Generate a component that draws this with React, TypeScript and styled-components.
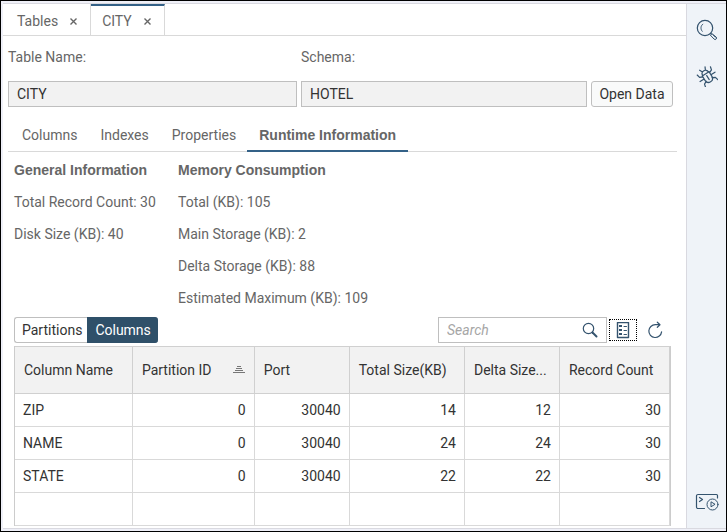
import React from "react";
import styled, { createGlobalStyle, css } from "styled-components";

const GlobalStyle = createGlobalStyle`
  *, *::before, *::after { box-sizing: border-box; }
  body {
    margin: 0;
    background: #fff;
    color: #333;
    font: 14px/20px Roboto, "Liberation Sans", sans-serif;
  }
  button, input { font: inherit; color: inherit; margin: 0; }
  button { cursor: pointer; }
`;

const headingFont = `"Liberation Sans", Arial, sans-serif`;

const Frame = styled.div`
  display: flex;
  min-height: 100vh;
  border: 1px solid #000;
  padding: 2px 0 2px 2px;
  background: #eff0f8;
`;

const Main = styled.main`
  flex: 1;
  min-width: 0;
  border-top: 1px solid #d9d9e0;
  border-bottom: 1px solid #d9d9e0;
  background: #fff;
`;

const SideBar = styled.aside`
  display: flex;
  flex-direction: column;
  align-items: center;
  gap: 24px;
  width: 40px;
  padding: 15px 0 17px;
  border-top: 1px solid #d9d9e0;
  border-left: 1px solid #d9d9e0;
  border-bottom: 1px solid #d9d9e0;
  background: #eff3f8;
`;

const SideButton = styled.button<{ $last?: boolean }>`
  display: flex;
  padding: 0;
  border: 0;
  background: none;
  ${(p) => p.$last && css`margin-top: auto;`}
`;

const TabStrip = styled.div`
  display: flex;
  height: 32px;
  border-bottom: 1px solid #d9d9d9;
`;

const EditorTab = styled.div<{ $active?: boolean }>`
  display: flex;
  align-items: center;
  gap: 11px;
  padding: ${(p) => (p.$active ? "0 12px 0 11px" : "2px 12px 0 14px")};
  border-right: 1px solid #d9d9d9;
  color: #666;
  ${(p) => p.$active && css`border-top: 2px solid #346187;`}
`;

const TabLabel = styled.button`
  padding: 0;
  border: 0;
  background: none;
`;

const CloseButton = styled.button`
  display: flex;
  padding: 2px 0 0;
  border: 0;
  background: none;
`;

const Properties = styled.form`
  display: grid;
  grid-template-columns: minmax(0, 289fr) minmax(0, 286fr) 82px;
  gap: 14px 4px;
  padding: 11px 13px 0 5px;
`;

const FieldLabel = styled.label`
  color: #666;
`;

const ReadOnlyField = styled.input`
  grid-row: 2;
  width: 100%;
  height: 26px;
  padding: 0 8px;
  border: 1px solid #bfbfbf;
  background: #f2f2f2;
`;

const OpenButton = styled.button`
  grid-row: 2;
  grid-column: 3;
  height: 26px;
  padding: 0;
  border: 1px solid #bfbfbf;
  border-radius: 3px;
  background: #f9fafa;
  white-space: nowrap;
`;

const SubTabs = styled.div`
  display: flex;
  height: 45px;
  margin: 0 9px 0 5px;
  border-bottom: 1px solid #d9d9d9;
`;

const SubTab = styled.button<{ $active?: boolean }>`
  display: flex;
  align-items: center;
  height: 45px;
  padding: 12px 11px 0 12px;
  border: 0;
  border-bottom: 2px solid transparent;
  background: none;
  color: #666;
  white-space: nowrap;
  &:first-child { padding-left: 14px; }
  ${(p) => p.$active && css`
    padding-right: 12px;
    border-color: #346187;
    font-family: ${headingFont};
    font-weight: 700;
  `}
`;

const Info = styled.div`
  display: grid;
  grid-template-columns: 164px 1fr;
  padding: 2px 16px 0 11px;
  color: #666;
`;

const InfoList = styled.ul`
  margin: 0;
  padding: 0;
  list-style: none;
  line-height: 32px;
`;

const InfoTitle = styled.h2`
  margin: 0;
  font: 700 14px/32px ${headingFont};
  white-space: nowrap;
`;

const Toolbar = styled.div`
  display: flex;
  align-items: center;
  height: 26px;
  margin: 3px 19px 3px 11px;
`;

const SegmentButton = styled.button<{ $active?: boolean }>`
  height: 26px;
  padding: 0 5px 0 7px;
  border: 1px solid #bfbfbf;
  border-right: 0;
  border-radius: 3px 0 0 3px;
  background: #fff;
  ${(p) => p.$active && css`
    padding: 0 7px;
    border-color: #2f5069;
    border-radius: 0 3px 3px 0;
    background: #2f5069;
    color: #fff;
  `}
`;

const SearchBox = styled.div`
  display: flex;
  align-items: center;
  width: 169px;
  height: 26px;
  margin-left: auto;
  padding: 0 8px;
  border: 1px solid #bfbfbf;
`;

const SearchInput = styled.input`
  flex: 1;
  min-width: 0;
  padding: 0;
  border: 0;
  outline: 0;
  background: none;
  &::placeholder {
    color: #a6a6a6;
    font-style: italic;
  }
`;

const IconButton = styled.button<{ $focused?: boolean }>`
  display: flex;
  align-items: center;
  justify-content: center;
  width: 28px;
  height: 22px;
  margin-left: 2px;
  padding: 0;
  border: 1px ${(p) => (p.$focused ? "dotted #000" : "solid transparent")};
  background: none;
  &:last-child { width: 24px; margin-left: 6px; }
`;

const GridWrap = styled.div`
  margin: 0 15px 1px 11px;
  border-left: 1px solid #ccc;
`;

const Grid = styled.table`
  width: 100%;
  table-layout: fixed;
  border-collapse: separate;
  border-spacing: 0;
  border-right: 1px solid #ccc;
`;

const HeadCell = styled.th<{ $share: number }>`
  width: ${(p) => p.$share}%;
  height: 48px;
  padding: 0 9px;
  border-top: 1px solid #d0d0d0;
  border-right: 1px solid #d0d0d0;
  border-bottom: 1px solid #d0d0d0;
  background: #f2f2f2;
  font-weight: 400;
  text-align: left;
`;

const HeadContent = styled.span`
  display: flex;
  align-items: center;
  justify-content: space-between;
  white-space: nowrap;
`;

const Cell = styled.td`
  height: 33px;
  padding: 0 8px;
  border-right: 1px solid #d9d9d9;
  border-bottom: 1px solid #d9d9d9;
  text-align: right;
  &:first-child { text-align: left; }
`;

const line = { fill: "none", stroke: "#34536e", strokeLinecap: "round", strokeLinejoin: "round" } as const;

const CloseIcon = () => (
  <svg width="9" height="9" viewBox="0 0 9 9" aria-hidden="true">
    <path d="M1.5 1.5l6 6M7.5 1.5l-6 6" fill="none" stroke="#666" strokeWidth="1.4" />
  </svg>
);

const MagnifierIcon = () => (
  <svg width="22" height="22" viewBox="0 0 22 22" {...line} aria-hidden="true">
    <circle cx="9" cy="9" r="7.7" strokeWidth="1.2" />
    <path d="M6.8 5.2C4.4 6.7 4.4 10.5 6.2 12.3M14.5 14.5l1 1M15.3 14.1l4.8 3.9a1.4 1.4 0 0 1-2 2.1L14.2 16zM17 15.8l2.4 2.4" />
  </svg>
);

const BugIcon = () => (
  <svg width="22" height="22" viewBox="0 0 22 22" {...line} strokeWidth="1.2" aria-hidden="true">
    <g transform="rotate(-32 11 11)">
      <path d="M7 8.4h8v5.2c0 5.6-8 5.6-8 0zM7.6 8.2c0-4.4 6.8-4.4 6.8 0M11 10.5v4.7M9.3 5.2L7.8 2.2M12.7 5.2l1.5-3M7 9.5L4 8.2 3.2 5M15 9.5l3-1.3.8-3.2M7 12H2.2M15 12h4.8M7.6 15l-3 1.6-.8 3.2M14.4 15l3 1.6.8 3.2" />
    </g>
  </svg>
);

const ConsoleIcon = () => (
  <svg width="24" height="18" viewBox="0 0 24 18" {...line} aria-hidden="true">
    <path d="M9.5 15.5H3a1.5 1.5 0 0 1-1.5-1.5V3A1.5 1.5 0 0 1 3 1.5h18.5a1 1 0 0 1 1 1V5M4.5 4.5L7.5 6.5l-3 2" strokeWidth="1.2" />
    <circle cx="17.5" cy="11.5" r="5.5" />
    <path d="M16 9.2v4.6l3.7-2.3z" />
  </svg>
);

const SearchIcon = () => (
  <svg width="16" height="16" viewBox="0 0 16 16" {...line} aria-hidden="true">
    <circle cx="6.5" cy="6.5" r="5.2" strokeWidth="1.2" />
    <path d="M10.5 10.5l4 4" strokeWidth="2" />
  </svg>
);

const ListIcon = () => (
  <svg width="14" height="17" viewBox="0 0 14 17" {...line} aria-hidden="true">
    <path d="M1.5 .5h11v15h-11z" strokeWidth="1.4" />
    <path d="M3 3h3v2h-3zM3 7h3v2h-3zM3 11h3v2h-3z" fill="#34536e" stroke="none" />
    <path d="M8 4.5h2.5M8 8.5h2.5M8 12.5h2.5" />
  </svg>
);

const RefreshIcon = () => (
  <svg width="16" height="18" viewBox="0 0 16 18" {...line} strokeWidth="1.2" aria-hidden="true">
    <path d="M12.5 3.7H8.3a6.4 6.4 0 1 0 6.3 7.2M10.3 1.2l2.7 2.5-2.7 2.6" />
  </svg>
);

const SortIcon = () => (
  <svg width="12" height="8" viewBox="0 0 12 8" aria-hidden="true">
    <path d="M4 .5h4M3 2.5h6M2 4.5h8M0 6.5h12" stroke="#777" />
  </svg>
);

const columns = [
  { title: "Column Name", share: 18 },
  { title: "Partition ID", share: 18.6, sorted: true },
  { title: "Port", share: 14.5 },
  { title: "Total Size(KB)", share: 17.6 },
  { title: "Delta Size...", share: 14.5 },
  { title: "Record Count", share: 16.8 },
];

const rows = [
  ["ZIP", "0", "30040", "14", "12", "30"],
  ["NAME", "0", "30040", "24", "24", "30"],
  ["STATE", "0", "30040", "22", "22", "30"],
  ["", "", "", "", "", ""],
];

const memory = ["Total (KB): 105", "Main Storage (KB): 2", "Delta Storage (KB): 88", "Estimated Maximum (KB): 109"];

export default function App() {
  return (
    <>
      <GlobalStyle />
      <Frame>
        <Main>
          <TabStrip>
            <EditorTab>
              <TabLabel>Tables</TabLabel>
              <CloseButton aria-label="Close Tables"><CloseIcon /></CloseButton>
            </EditorTab>
            <EditorTab $active>
              <TabLabel>CITY</TabLabel>
              <CloseButton aria-label="Close CITY"><CloseIcon /></CloseButton>
            </EditorTab>
          </TabStrip>

          <Properties onSubmit={(e) => e.preventDefault()}>
            <FieldLabel htmlFor="table-name">Table Name:</FieldLabel>
            <FieldLabel htmlFor="schema">Schema:</FieldLabel>
            <ReadOnlyField id="table-name" value="CITY" readOnly />
            <ReadOnlyField id="schema" value="HOTEL" readOnly />
            <OpenButton type="button">Open Data</OpenButton>
          </Properties>

          <SubTabs role="tablist">
            <SubTab role="tab">Columns</SubTab>
            <SubTab role="tab">Indexes</SubTab>
            <SubTab role="tab">Properties</SubTab>
            <SubTab role="tab" aria-selected $active>Runtime Information</SubTab>
          </SubTabs>

          <Info>
            <section>
              <InfoTitle>General Information</InfoTitle>
              <InfoList>
                <li>Total Record Count: 30</li>
                <li>Disk Size (KB): 40</li>
              </InfoList>
            </section>
            <section>
              <InfoTitle>Memory Consumption</InfoTitle>
              <InfoList>{memory.map((m) => <li key={m}>{m}</li>)}</InfoList>
            </section>
          </Info>

          <Toolbar>
            <SegmentButton>Partitions</SegmentButton>
            <SegmentButton $active>Columns</SegmentButton>
            <SearchBox>
              <SearchInput type="text" placeholder="Search" aria-label="Search" />
              <SearchIcon />
            </SearchBox>
            <IconButton $focused aria-label="Column settings"><ListIcon /></IconButton>
            <IconButton aria-label="Refresh"><RefreshIcon /></IconButton>
          </Toolbar>

          <GridWrap>
            <Grid>
              <thead>
                <tr>
                  {columns.map((c) => (
                    <HeadCell key={c.title} $share={c.share} scope="col">
                      <HeadContent>{c.title}{c.sorted && <SortIcon />}</HeadContent>
                    </HeadCell>
                  ))}
                </tr>
              </thead>
              <tbody>
                {rows.map((r, i) => (
                  <tr key={i}>{r.map((v, j) => <Cell key={j}>{v}</Cell>)}</tr>
                ))}
              </tbody>
            </Grid>
          </GridWrap>
        </Main>
        <SideBar>
          <SideButton aria-label="Search"><MagnifierIcon /></SideButton>
          <SideButton aria-label="Debugger"><BugIcon /></SideButton>
          <SideButton aria-label="Run console" $last><ConsoleIcon /></SideButton>
        </SideBar>
      </Frame>
    </>
  );
}
